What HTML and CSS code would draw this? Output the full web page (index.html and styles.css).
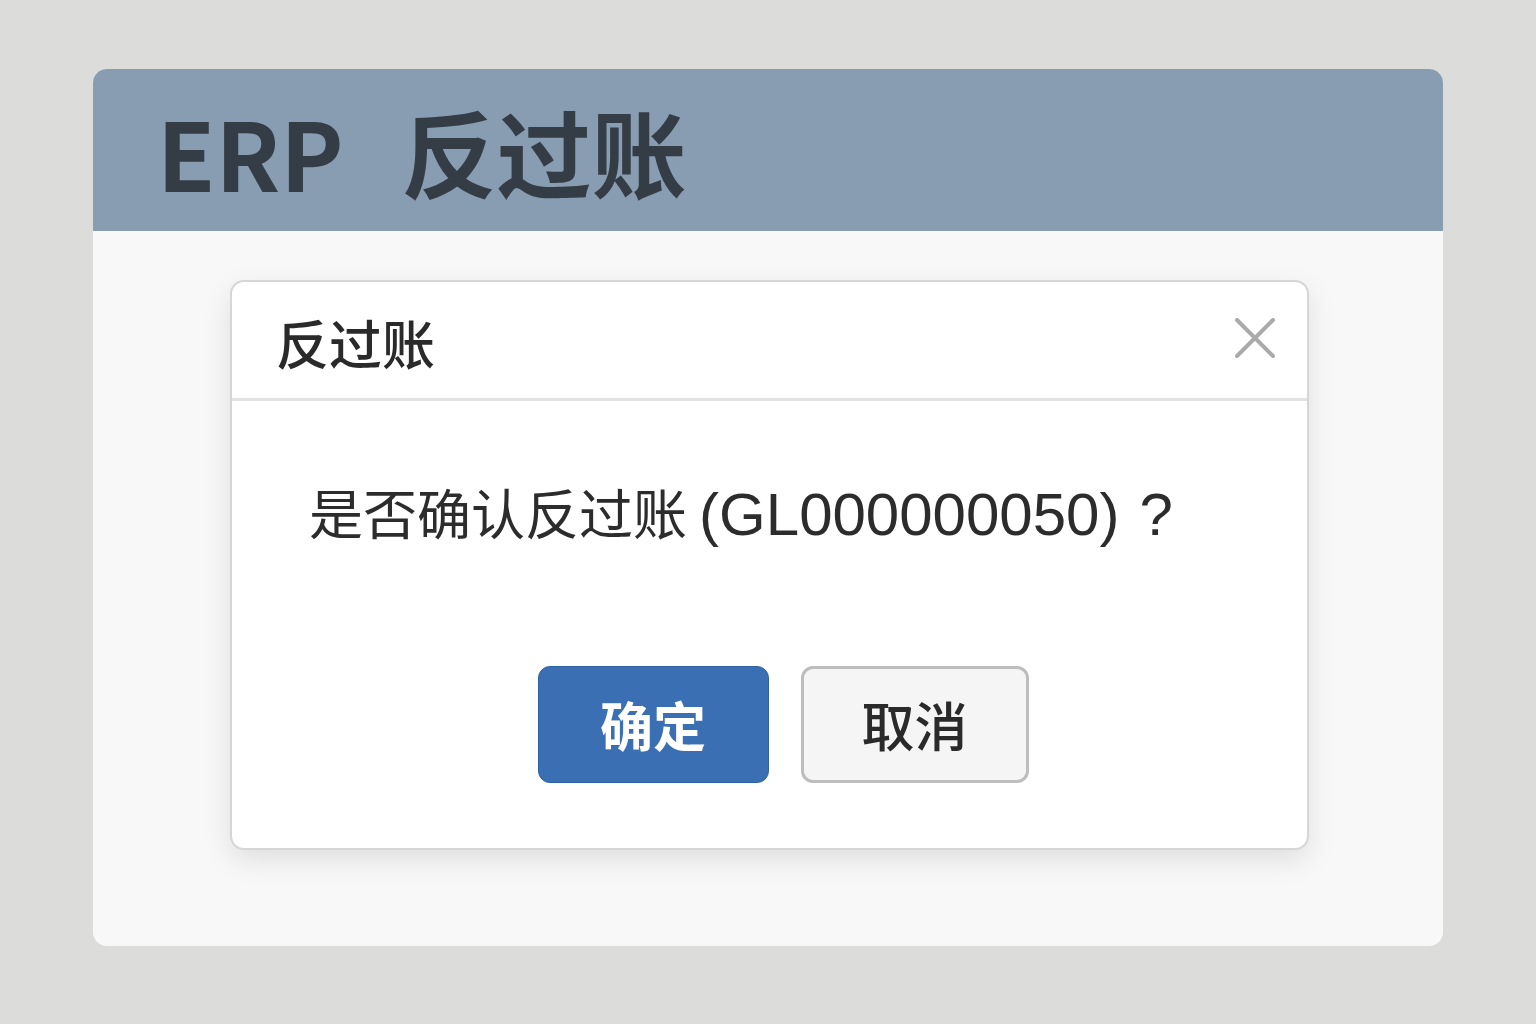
FILE: index.html
```html
<!DOCTYPE html>
<html lang="zh-CN">
<head>
    <meta charset="UTF-8">
    <meta name="viewport" content="width=device-width, initial-scale=1.0">
    <title>ERP 反过账</title>
    <link rel="stylesheet" href="styles.css">
</head>
<body>
    <div class="app">
        <div class="app-header">
            <h1 class="app-title">ERP<span class="app-title-cn">反过账</span></h1>
        </div>
        <div class="app-body">
            <div class="dialog">
                <div class="dialog-head">
                    <span class="dialog-title">反过账</span>
                    <span class="close" id="close-dialog">
                        <svg width="40" height="40" viewBox="0 0 40 40">
                            <path d="M2 2 L38 38 M38 2 L2 38" stroke="#aaaaaa" stroke-width="4" stroke-linecap="round"/>
                        </svg>
                    </span>
                </div>
                <div class="dialog-body">
                    <p class="message">是否确认反过账 <span class="code">(GL000000050)<span class="qmark">?</span></span></p>
                    <div class="actions">
                        <button class="btn btn-primary">确定</button>
                        <button class="btn btn-default">取消</button>
                    </div>
                </div>
            </div>
        </div>
    </div>
</body>
</html>
```

FILE: styles.css
```css
body {
    margin: 0;
    background-color: #dcdcda;
    font-family: "Noto Sans CJK SC", "Noto Sans", sans-serif;
    color: #2b2b2b;
}
.app {
    width: 1350px;
    height: 877px;
    margin: 69px 0 0 93px;
    background: #f8f8f8;
    border-radius: 14px;
    overflow: hidden;
    display: flex;
    flex-direction: column;
}
.app-header {
    height: 162px;
    background: #889db1;
    display: flex;
    align-items: center;
    padding-left: 64px;
    flex-shrink: 0;
}
.app-title {
    margin: 0;
    font-size: 95px;
    font-weight: 700;
    color: #343c46;
    line-height: 1;
}
.app-title-cn {
    margin-left: 58px;
}
.app-body {
    flex: 1;
    display: flex;
    justify-content: center;
    align-items: flex-start;
    padding-top: 49px;
    padding-left: 3px;
}
.dialog {
    width: 1075px;
    height: 566px;
    background: #ffffff;
    border: 2px solid #d6d6d6;
    border-radius: 14px;
    box-shadow: 0 10px 28px rgba(0, 0, 0, 0.10);
    display: flex;
    flex-direction: column;
}
.dialog-head {
    height: 116px;
    border-bottom: 3px solid #e2e2e2;
    display: flex;
    align-items: center;
    justify-content: space-between;
    padding: 0 32px 0 44px;
    flex-shrink: 0;
}
.dialog-title {
    font-size: 53px;
    font-weight: 500;
    color: #2a2a2a;
    margin-top: 4px;
}
.close {
    display: flex;
    cursor: pointer;
    margin-bottom: 4px;
}
.dialog-body {
    padding: 74px 40px 0 77px;
}
.message {
    margin: 0;
    font-size: 54px;
    line-height: 74px;
    color: #2c2c2c;
    white-space: nowrap;
}
.code {
    font-family: "Liberation Sans", Arial, sans-serif;
    font-size: 60px;
    line-height: 1;
}
.qmark {
    margin-left: 20px;
}
.actions {
    margin-top: 117px;
    display: flex;
    justify-content: center;
    gap: 32px;
    padding-right: 10px;
}
.btn {
    font-family: inherit;
    font-size: 53px;
    font-weight: 700;
    height: 117px;
    border-radius: 12px;
    cursor: pointer;
    line-height: 1;
}
.btn-primary {
    width: 231px;
    background: #3a6fb3;
    color: #ffffff;
    border: 1px solid #2f62a5;
}
.btn-default {
    width: 228px;
    background: #f5f5f5;
    color: #2a2a2a;
    border: 3px solid #bdbdbd;
    font-weight: 500;
}
```
